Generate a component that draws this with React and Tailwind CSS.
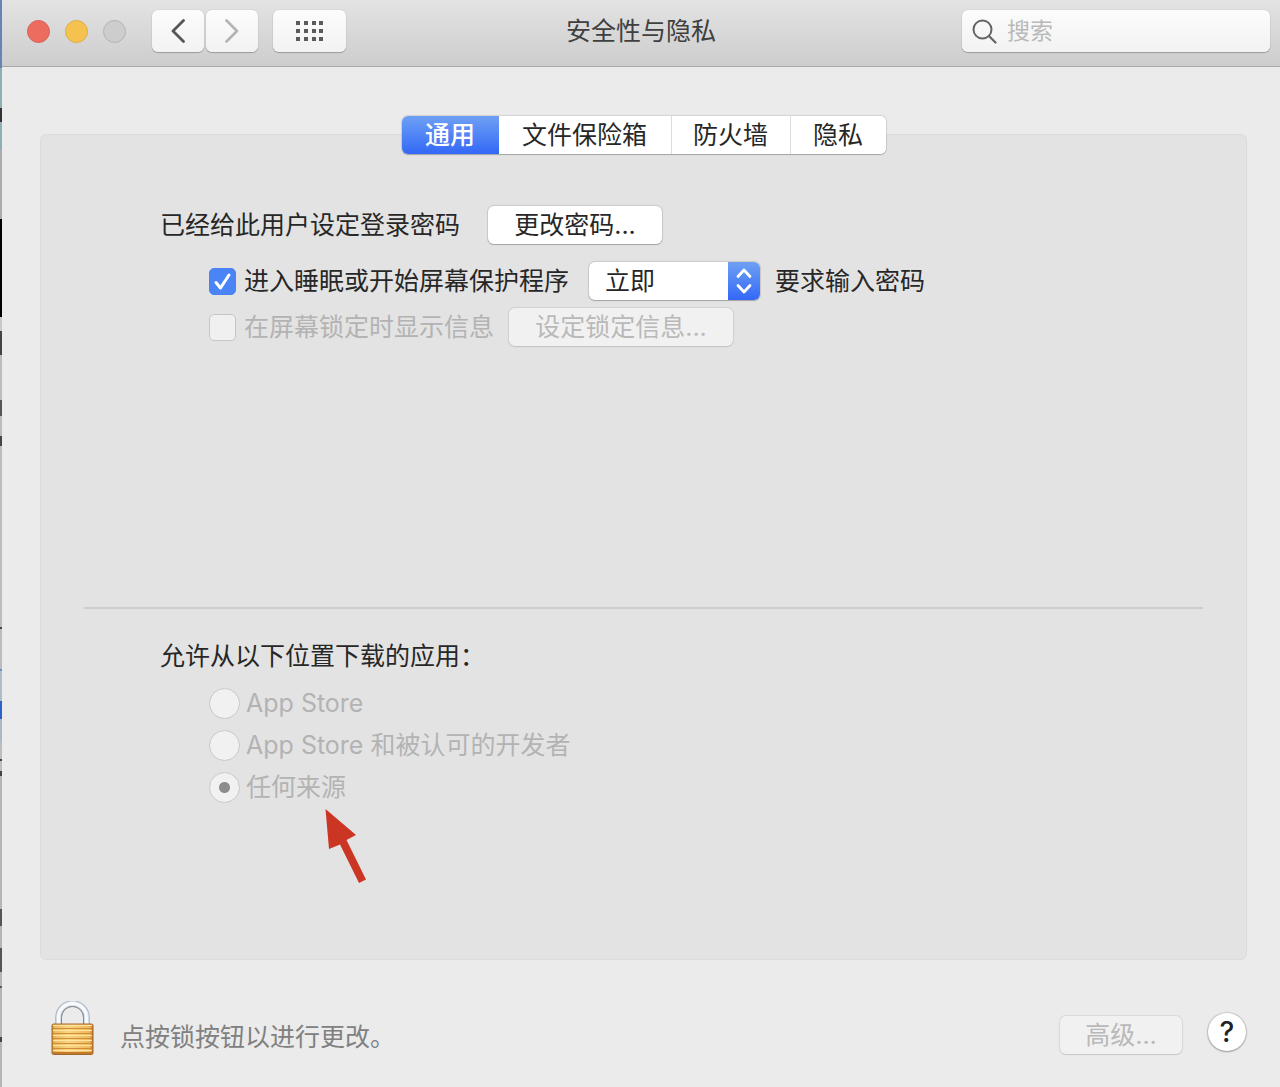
import { useState } from 'react'
import clsx from 'clsx'

const TABS = [
  { id: 'general', label: '通用', width: 'w-[97px]' },
  { id: 'filevault', label: '文件保险箱', width: 'w-[172px]' },
  { id: 'firewall', label: '防火墙', width: 'w-[119px]' },
  { id: 'privacy', label: '隐私', width: 'w-[96px]' },
]

const SOURCES = [
  { id: 'store', label: 'App Store' },
  { id: 'store-dev', label: 'App Store 和被认可的开发者' },
  { id: 'anywhere', label: '任何来源' },
]

export default function App() {
  return (
    <div className="flex min-h-screen bg-[#ebebeb] font-['Inter','Noto_Sans_CJK_SC',sans-serif] text-[25px] leading-[38px] text-[#272727]">
      <DesktopEdge />
      <div className="flex min-w-0 flex-1 flex-col">
        <TitleBar />
        <main className="flex flex-1 flex-col pr-[33px] pl-[38px] pt-[67px]">
          <GeneralPanel />
        </main>
        <Footer />
      </div>
    </div>
  )
}

// sliver of whatever sits behind the window
function DesktopEdge() {
  return (
    <div
      aria-hidden
      className="w-[2px] shrink-0 bg-[linear-gradient(#6684b5_0_68px,#8fb0b2_68px_108px,#333_108px_122px,#8fb0b2_122px_150px,#a9adb2_150px_219px,#000_219px_317px,#c8c8c8_317px_331px,#444_331px_355px,#bdbdbd_355px_400px,#555_400px_416px,#bdbdbd_416px_436px,#444_436px_446px,#bdbdbd_446px_627px,#444_627px_629px,#bdbdbd_629px_669px,#6f8fd0_669px_671px,#b0bdc8_671px_701px,#2f62c8_701px_719px,#a9b8c4_719px_741px,#bdbdbd_741px_759px,#444_759px_761px,#bdbdbd_761px_771px,#444_771px_776px,#b5b5b5_776px_909px,#555_909px_926px,#b5b5b5_926px_948px,#555_948px_972px,#b5b5b5_972px_986px,#555_986px_988px,#b5b5b5_988px_1037px,#444_1037px_1042px,#b5b5b5_1042px)]"
    />
  )
}

function TitleBar() {
  const toolBtn = 'flex h-[42px] items-center justify-center rounded-md bg-linear-to-b from-[#fcfcfc] to-[#f2f2f2] shadow-[0_1px_1px_#00000040,0_0_1px_#00000040]'
  return (
    <header className="flex items-center border-b border-[#a9a9a9] bg-linear-to-b from-[#e3e3e3] to-[#cdcdcd] px-[10px] pt-[10px] pb-[14px]">
      <div className="flex flex-1 items-center">
        <div className="ml-[15px] flex gap-[15px]">
          <button aria-label="关闭" className="size-[23px] rounded-full border border-[#dc6157] bg-[#ec6c60]" />
          <button aria-label="最小化" className="size-[23px] rounded-full border border-[#e0ac42] bg-[#f5c250]" />
          <button aria-label="缩放" disabled className="size-[23px] rounded-full border border-[#b3b3b3] bg-[#cdcdcd]" />
        </div>
        <div className="ml-[26px] flex gap-[2px]">
          <button aria-label="后退" className={clsx(toolBtn, 'w-[52px]')}>
            <svg width="14" height="24" viewBox="0 0 14 24" fill="none" aria-hidden>
              <path d="M12.500 1.500L2 12l10.500 10.500" stroke="#555" strokeWidth="2.8" strokeLinecap="round" strokeLinejoin="round" />
            </svg>
          </button>
          <button aria-label="前进" disabled className={clsx(toolBtn, 'w-[52px]')}>
            <svg width="14" height="24" viewBox="0 0 14 24" fill="none" aria-hidden>
              <path d="M1.500 1.500L12 12 1.500 22.500" stroke="#b4b4b4" strokeWidth="2.6" strokeLinecap="round" strokeLinejoin="round" />
            </svg>
          </button>
        </div>
        <button aria-label="显示全部" className={clsx(toolBtn, 'ml-[15px] w-[73px]')}>
          <svg width="28" height="20" viewBox="0 0 28 20" fill="#5a5a5a" aria-hidden>
            {[0, 8, 16].map((y) => [0, 8, 16, 23].map((x) => <rect key={`${x}-${y}`} x={x} y={y} width="4" height="4" />))}
          </svg>
        </button>
      </div>
      <h1 className="text-[#404040]">安全性与隐私</h1>
      <div className="flex flex-1 justify-end">
        <label className={clsx(toolBtn, 'w-[308px] gap-[10px] px-[10px]')}>
          <svg className="shrink-0" width="25" height="25" viewBox="0 0 25 25" fill="none" aria-hidden>
            <circle cx="10.5" cy="10.5" r="9" stroke="#646464" strokeWidth="2" />
            <path d="M17 17l6.5 6.5" stroke="#646464" strokeWidth="2.2" strokeLinecap="round" />
          </svg>
          <input type="text" aria-label="搜索" placeholder="搜索" className="h-[38px] w-full min-w-0 bg-transparent text-[23px] outline-none placeholder:text-[#b9b9b9]" />
        </label>
      </div>
    </header>
  )
}

function PushButton({ className, ...props }) {
  return (
    <button
      className={clsx(
        'h-[38px] shrink-0 rounded-md bg-white leading-[38px] whitespace-nowrap shadow-[0_0_1px_1px_#0000001c,0_1px_1px_#00000030]',
        'disabled:bg-[#f1f1f1] disabled:text-[#b9b9b9] disabled:shadow-[0_0_1px_1px_#00000014,0_1px_1px_#00000014]',
        className,
      )}
      {...props}
    />
  )
}

function Tabs() {
  const [tab, setTab] = useState('general')
  return (
    <div role="tablist" className="-mt-[19px] flex h-[38px] self-center rounded-md bg-white shadow-[0_0_1px_1px_#0000001c,0_1px_1px_#00000030]">
      {TABS.map((t, i) => (
        <button
          key={t.id}
          role="tab"
          aria-selected={t.id === tab}
          onClick={() => setTab(t.id)}
          className={clsx(
            'text-center whitespace-nowrap first:rounded-l-md last:rounded-r-md',
            t.width,
            t.id === tab ? 'bg-linear-to-b from-[#6f9ff4] to-[#3467f6] font-medium text-white' : 'bg-white',
            i > 1 && 'border-l border-[#dcdcdc]',
          )}
        >
          {t.label}
        </button>
      ))}
    </div>
  )
}

function CheckBox({ id, ...props }) {
  return (
    <span className="grid shrink-0 place-items-center">
      <input
        id={id}
        type="checkbox"
        className="peer col-start-1 row-start-1 size-[27px] appearance-none rounded-[5px] border border-[#c6c6c6] bg-[#f0f0f0] checked:border-[#4a82f5] checked:bg-[#4a84f7]"
        {...props}
      />
      <svg className="pointer-events-none invisible col-start-1 row-start-1 peer-checked:visible" width="27" height="27" viewBox="0 0 27 27" fill="none" aria-hidden>
        <path d="M7 14.5l4.5 5.5L20 7" stroke="#fff" strokeWidth="3" strokeLinecap="round" strokeLinejoin="round" />
      </svg>
    </span>
  )
}

function DelaySelect() {
  return (
    <div className="relative ml-[20px] w-[171px] shrink-0">
      <select
        id="delay"
        className="block h-[38px] w-full appearance-none rounded-md bg-white pl-4 leading-[38px] shadow-[0_0_1px_1px_#0000001c,0_1px_1px_#00000030]"
      >
        <option>立即</option>
      </select>
      <span className="pointer-events-none absolute inset-y-0 right-0 flex w-8 items-center justify-center rounded-r-md bg-linear-to-b from-[#6f9ff4] to-[#3467f6]">
        <svg width="16" height="26" viewBox="0 0 16 26" fill="none" stroke="#fff" strokeWidth="2.8" strokeLinecap="round" strokeLinejoin="round" aria-hidden>
          <path d="M2 8.500l6-6.500 6 6.500M2 17.500l6 6.500 6-6.500" />
        </svg>
      </span>
    </div>
  )
}

function GeneralPanel() {
  const [locked, setLocked] = useState(true)
  return (
    <section className="flex flex-1 flex-col rounded-md border border-[#dcdcdc] bg-[#e3e3e3]">
      <Tabs />

      <div className="flex-1 pt-[52px] pb-[260px] pl-[119px] whitespace-nowrap">
        <div className="flex items-center gap-[28px]">
          <span>已经给此用户设定登录密码</span>
          <PushButton className="w-[174px]">更改密码...</PushButton>
        </div>
        <div className="mt-[18px] flex items-center pl-[49px]">
          <CheckBox id="require" checked={locked} onChange={(e) => setLocked(e.target.checked)} />
          <label htmlFor="require" className="ml-2">进入睡眠或开始屏幕保护程序</label>
          <DelaySelect />
          <label htmlFor="delay" className="ml-[15px]">要求输入密码</label>
        </div>
        <div className="mt-2 flex items-center pl-[49px] text-[#b3b3b3]">
          <CheckBox id="message" disabled />
          <label htmlFor="message" className="ml-2">在屏幕锁定时显示信息</label>
          <PushButton disabled className="ml-[15px] w-[224px]">设定锁定信息...</PushButton>
        </div>
      </div>

      <hr className="mx-[43px] border-t-2 border-[#cdcdcd]" />

      <fieldset className="pb-[153px] pl-[119px]">
        <legend className="pt-[28px]">允许从以下位置下载的应用：</legend>
        <div className="mt-[9px] flex flex-col items-start gap-1 pl-[49px] text-[#b3b3b3]">
          {SOURCES.map((s) => (
            <label key={s.id} className="relative flex items-center gap-[6px]">
              <input
                type="radio"
                name="source"
                disabled
                defaultChecked={s.id === 'anywhere'}
                className="size-[31px] shrink-0 appearance-none rounded-full border border-[#c9c9c9] bg-[#f1f1f1] checked:bg-[radial-gradient(circle,#8c8c8c_5px,#f1f1f1_6px)]"
              />
              {s.label}
              {s.id === 'anywhere' && <Pointer />}
            </label>
          ))}
        </div>
      </fieldset>
    </section>
  )
}

function Pointer() {
  return (
    <svg className="absolute top-[40px] left-[116px]" width="42" height="76" viewBox="0 0 42 76" aria-hidden>
      <path d="M.5 1L31 27l-9.5 5L41 71.500l-7 3.500-19-38.500L4 41z" fill="#cb3523" />
    </svg>
  )
}

function Footer() {
  return (
    <footer className="flex items-center pt-[41px] pr-[34px] pb-[31px] pl-[49px]">
      <button aria-label="锁定" className="shrink-0">
        <PadlockIcon />
      </button>
      <p className="ml-[25px] flex-1 pt-4 text-[#808080]">点按锁按钮以进行更改。</p>
      <PushButton disabled className="mt-3 w-[122px]">高级...</PushButton>
      <button aria-label="帮助" className="mt-[7px] ml-[26px] size-[38px] shrink-0 rounded-full bg-white text-[28px] leading-[38px] font-medium text-[#222] shadow-[0_0_1px_1px_#00000024,0_1px_2px_#00000040]">
        ?
      </button>
    </footer>
  )
}

function PadlockIcon() {
  return (
    <svg width="44" height="55" viewBox="0 0 44 55" fill="none" aria-hidden>
      <defs>
        <linearGradient id="brass" x1="0" x2="1" y1="0" y2="0">
          <stop offset="0" stopColor="#c98a38" />
          <stop offset=".06" stopColor="#eeb95a" />
          <stop offset=".4" stopColor="#fbd582" />
          <stop offset=".92" stopColor="#efb858" />
          <stop offset="1" stopColor="#b9752a" />
        </linearGradient>
      </defs>
      <path d="M7.500 24V16.500a14 14 0 0128 0V24" stroke="#a7b0b7" strokeWidth="6.500" />
      <path d="M7.500 24V16.500a14 14 0 0128 0V24" stroke="#d5dde4" strokeWidth="5" />
      <path d="M7.500 24V16.500a14 14 0 0128 0V24" stroke="#f7faff" strokeWidth="3" />
      <path d="M10.500 24v-7.500a11 11 0 0122 0V24" stroke="#84898e" />
      <rect x="1" y="23" width="41" height="30.500" rx="1.500" fill="url(#brass)" stroke="#a2662a" />
      <path d="M2 24.500h39M2 29.500h39M2 34.500h39M2 39.500h39M2 44.500h39M2 49.500h39" stroke="#ffe3a0" />
      <path d="M2 27.500h39M2 32.500h39M2 37.500h39M2 42.500h39M2 47.500h39" stroke="#cf8f3a" />
      <path d="M2 52h39" stroke="#c27a2c" strokeWidth="2" />
    </svg>
  )
}
